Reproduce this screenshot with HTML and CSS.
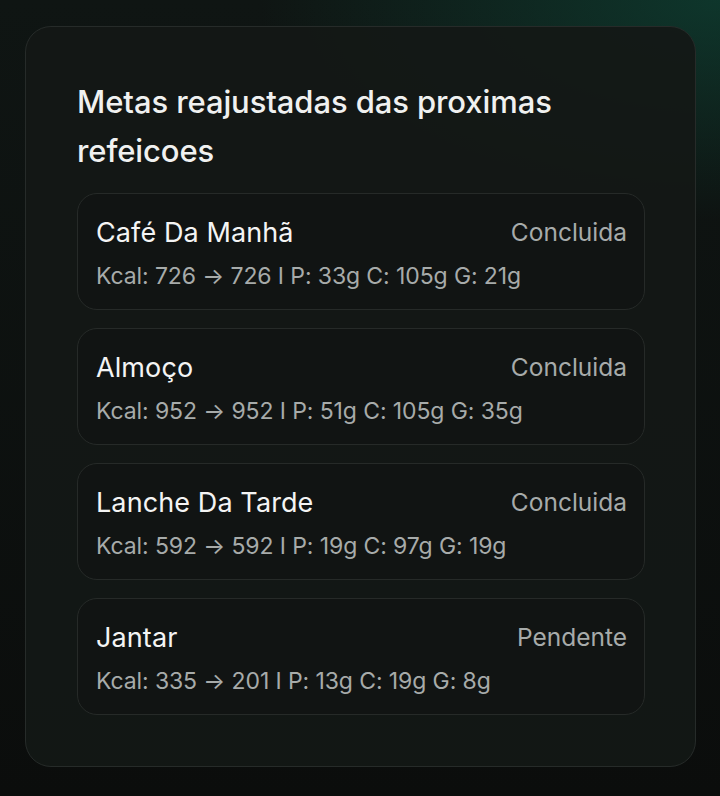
FILE: index.html
```html
<!DOCTYPE html>
<html lang="pt">

<head>
    <meta charset="UTF-8">
    <meta name="viewport" content="width=device-width, initial-scale=1.0">
    <title>Metas reajustadas</title>
    <link rel="stylesheet" href="styles.css">
</head>

<body>
    <div class="panel">
        <h2 class="panel-title">Metas reajustadas das proximas refeicoes</h2>
        <div class="meals">
            <div class="meal">
                <div class="meal-head">
                    <span class="meal-name">Café Da Manhã</span>
                    <span class="meal-status">Concluida</span>
                </div>
                <div class="meal-info">Kcal: 726 → 726 I P: 33g C: 105g G: 21g</div>
            </div>
            <div class="meal">
                <div class="meal-head">
                    <span class="meal-name">Almoço</span>
                    <span class="meal-status">Concluida</span>
                </div>
                <div class="meal-info">Kcal: 952 → 952 I P: 51g C: 105g G: 35g</div>
            </div>
            <div class="meal">
                <div class="meal-head">
                    <span class="meal-name">Lanche Da Tarde</span>
                    <span class="meal-status">Concluida</span>
                </div>
                <div class="meal-info">Kcal: 592 → 592 I P: 19g C: 97g G: 19g</div>
            </div>
            <div class="meal">
                <div class="meal-head">
                    <span class="meal-name">Jantar</span>
                    <span class="meal-status">Pendente</span>
                </div>
                <div class="meal-info">Kcal: 335 → 201 I P: 13g C: 19g G: 8g</div>
            </div>
        </div>
    </div>
</body>

</html>
```

FILE: styles.css
```css
html,
body {
    height: 100%;
}

body {
    margin: 0;
    padding: 26px 24px 0 25px;
    box-sizing: border-box;
    font-family: Inter, "Noto Sans", sans-serif;
    background-color: #0b0d0c;
    background-image:
        radial-gradient(ellipse 460px 220px at 100% 0%, rgba(14, 68, 54, 0.7), rgba(14, 68, 54, 0) 100%),
        linear-gradient(180deg, #0f1513 0%, #0b0d0c 100%);
    color: #f2f2f2;
}

.panel {
    border: 1px solid #262b29;
    border-radius: 26px;
    background-color: rgba(20, 24, 22, 0.92);
    padding: 50px 50px 51px 51px;
}

.panel-title {
    margin: 0 0 18px;
    font-size: 31px;
    font-weight: 450;
    line-height: 49px;
    letter-spacing: -0.1px;
    color: #f0f1f0;
    padding-right: 40px;
}

.meals {
    display: flex;
    flex-direction: column;
    gap: 18px;
}

.meal {
    border: 1px solid #262a28;
    border-radius: 20px;
    background-color: #111413;
    padding: 20px 17px 17px 18px;
}

.meal-head {
    display: flex;
    justify-content: space-between;
    align-items: center;
    height: 36px;
}

.meal-name {
    font-size: 27px;
    font-weight: 400;
    letter-spacing: 0.1px;
    color: #f4f4f4;
}

.meal-status {
    font-size: 24.5px;
    letter-spacing: 0;
    color: #a7abaa;
}

.meal-info {
    margin-top: 10px;
    line-height: 32px;
    font-size: 23px;
    letter-spacing: -0.1px;
    color: #a7abaa;
}
```
